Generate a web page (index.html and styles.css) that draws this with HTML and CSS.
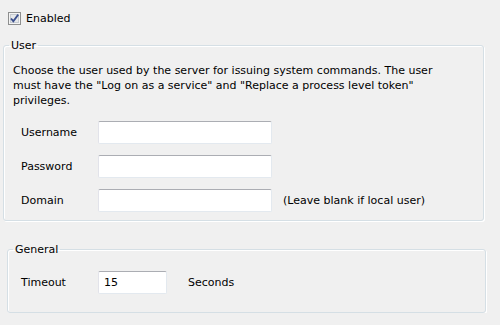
FILE: index.html
```html
<!DOCTYPE html>
<html lang="en">
<head>
  <meta charset="UTF-8">
  <title>Service Settings</title>
  <link rel="stylesheet" href="styles.css">
</head>
<body>
  <div class="panel">
    <label class="check">
      <span class="check-box">
        <svg width="13" height="13" viewBox="0 0 13 13">
          <rect x="0.5" y="0.5" width="12" height="12" fill="#f4f4f4" stroke="#8e8f8f"/>
          <rect x="2.5" y="2.5" width="8" height="8" fill="#e6e8ea" stroke="#c6cbd1"/>
          <path d="M3 6.5 L5.3 9.2 L10.2 2.6" fill="none" stroke="#3b4f8d" stroke-width="1.8"/>
        </svg>
      </span>
      Enabled
    </label>

    <!-- User account section -->
    <fieldset class="group group-user">
      <legend>User</legend>
      <p class="note">Choose the user used by the server for issuing system commands. The user must have the "Log on as a service" and "Replace a process level token" privileges.</p>
      <div class="fields">
        <label for="username">Username</label>
        <input type="text" id="username">
        <span></span>

        <label for="password">Password</label>
        <input type="password" id="password">
        <span></span>

        <label for="domain">Domain</label>
        <input type="text" id="domain">
        <span class="hint">(Leave blank if local user)</span>
      </div>
    </fieldset>

    <!-- General section -->
    <fieldset class="group group-general">
      <legend>General</legend>
      <div class="timeout-row">
        <label for="timeout">Timeout</label>
        <input type="text" id="timeout" class="short" value="15">
        <span class="unit">Seconds</span>
      </div>
    </fieldset>
  </div>
</body>
</html>
```

FILE: styles.css
```css
/* Base Styles */
body {
  margin: 0;
  background: #f0f0f0;
  font-family: 'DejaVu Sans', sans-serif;
  font-size: 11px;
  line-height: 15px;
  color: #000000;
}

.panel {
  padding-top: 11px;
}

.check {
  display: flex;
  align-items: center;
  gap: 5px;
  margin-left: 8px;
  height: 15px;
}

.check-box {
  display: block;
  width: 13px;
  height: 13px;
}

.check-box svg {
  display: block;
}

/* Group boxes */
.group {
  box-sizing: border-box;
  margin: 0;
  padding: 0;
  border: 1px solid #d5dfe5;
  border-radius: 3px;
  box-shadow: inset 1px 1px 0 #ffffff, 1px 1px 0 #ffffff;
}

.group legend {
  margin-left: 5px;
  padding: 0 2px;
  line-height: 15px;
}

.group-user {
  margin: 12px 0 0 3px;
  width: 481px;
  padding-bottom: 8px;
}

.group-general {
  margin: 21px 0 0 7px;
  width: 479px;
  padding-bottom: 18px;
}

.note {
  margin: 10px 0 0 9px;
  width: 445px;
}

.fields {
  display: grid;
  grid-template-columns: 77px 174px auto;
  row-gap: 11px;
  align-items: center;
  margin: 13px 0 0 17px;
}

.hint {
  margin-left: 11px;
}

input {
  box-sizing: border-box;
  height: 23px;
  width: 174px;
  margin: 0;
  padding: 0 5px;
  border: 1px solid #e3e9ef;
  border-top-color: #abadb3;
  border-left-color: #e2e3ea;
  border-radius: 2px;
  background: #ffffff;
  font-family: inherit;
  font-size: 11px;
  color: #000000;
}

input:focus {
  outline: none;
}

.timeout-row {
  display: flex;
  align-items: center;
  margin: 14px 0 0 13px;
}

.timeout-row label {
  width: 77px;
}

.short {
  width: 69px;
}

.unit {
  margin-left: 21px;
}
```
